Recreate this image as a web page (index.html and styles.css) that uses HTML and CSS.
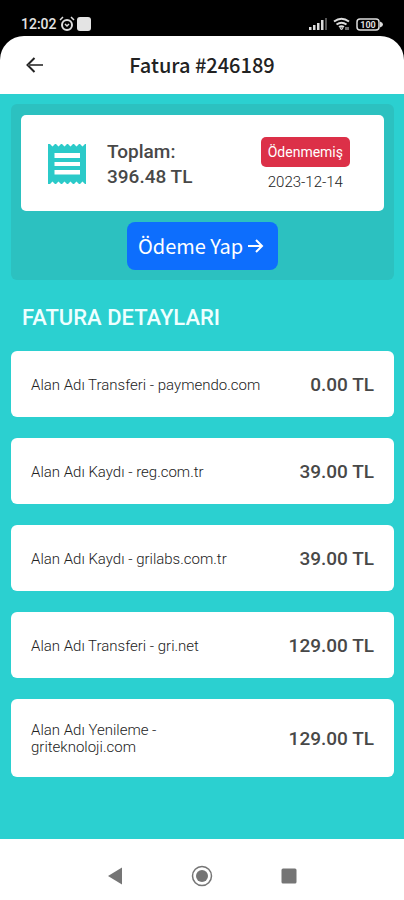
FILE: index.html
```html
<!DOCTYPE html>
<html lang="tr">
<head>
<meta charset="utf-8">
<meta name="viewport" content="width=device-width, initial-scale=1">
<title>Fatura #246189</title>
<link rel="stylesheet" href="styles.css">
</head>
<body>
<div class="status">
  <div class="status-group">
    <span class="clock">12:02</span>
    <svg width="16" height="16" viewBox="0 0 16 16" fill="none" stroke="#ddd" stroke-width="2"><circle cx="8" cy="9" r="5"/><path d="M1 4 4 1M15 4 12 1M6 8l2 2 2-2" stroke-width="1.5"/></svg>
    <span class="app-dot"></span>
  </div>
  <div class="status-group status-right">
    <svg width="18" height="12" viewBox="0 0 18 12" fill="#ddd"><path d="M0 9h2.500v3H0zM4 7h2.500v5H4zM8 5h2.500v7H8zM12 2h2.500v10H12z"/><path d="M16 0h2v12h-2z" fill="#555"/></svg>
    <svg width="17" height="14" viewBox="0 0 17 14" fill="none" stroke="#ddd" stroke-width="2"><path d="M1 4.500Q8.500-1 16 4.500M3.500 7.500q5-3.500 10 0M6 10q2.500-1.500 5 0"/><path d="M7 11h3l-1.500 2zM13 10v3M15 10v3" stroke-width="1"/></svg>
    <svg width="27" height="13" viewBox="0 0 27 13"><rect x="1" y="1" width="22" height="11" rx="3" fill="none" stroke="#ddd" stroke-width="1.500"/><path d="M24 3.500q3 1 3 3t-3 3z" fill="#ddd"/><text x="12" y="9.500" text-anchor="middle" class="battery-text">100</text></svg>
  </div>
</div>
<header class="header">
  <button class="back" aria-label="Geri"><svg width="18" height="16" viewBox="0 0 18 16" fill="none" stroke="#222" stroke-width="2"><path d="M8.500 1 1.500 8l7 7"/><path d="M2 8h15" stroke="#555"/></svg></button>
  <h1>Fatura #246189</h1>
</header>
<main class="main">
  <section class="panel">
    <div class="summary">
      <svg width="38" height="40" viewBox="0 0 38 40"><path fill="#2bcac9" d="M0 0l2 0 2.500 2.500L7 0h1l2.500 2.500L13 0h1l2.500 2.500L19 0h1l2.500 2.500L25 0h1l2.500 2.500L31 0h1l2.500 2.500L37 0h1v40h-1l-2.500-2.500L32 40h-1l-2.500-2.500L26 40h-1l-2.500-2.500L20 40h-1l-2.500-2.500L14 40h-1l-2.500-2.500L8 40H7l-2.500-2.500L2 40H0z"/><path fill="#fff" d="M6.500 9h25.500v5H6.500zM6.500 18h25.500v4H6.500zM6.500 26h25.500v4.500H6.500z"/></svg>
      <div class="total"><span>Toplam:</span><span>396.48 TL</span></div>
      <div class="state"><span class="badge">Ödenmemiş</span><time datetime="2023-12-14">2023-12-14</time></div>
    </div>
    <button class="pay">Ödeme Yap <svg width="16" height="16" viewBox="0 0 16 16" fill="none" stroke="#fff" stroke-width="2"><path d="M0 8h14M8 2l6 6-6 6"/></svg></button>
  </section>
  <h2>FATURA DETAYLARI</h2>
  <ul class="items">
    <li><span class="name">Alan Adı Transferi - paymendo.com</span><span class="price">0.00 TL</span></li>
    <li><span class="name">Alan Adı Kaydı - reg.com.tr</span><span class="price">39.00 TL</span></li>
    <li><span class="name">Alan Adı Kaydı - grilabs.com.tr</span><span class="price">39.00 TL</span></li>
    <li><span class="name">Alan Adı Transferi - gri.net</span><span class="price">129.00 TL</span></li>
    <li><span class="name">Alan Adı Yenileme -<br>griteknoloji.com</span><span class="price">129.00 TL</span></li>
  </ul>
</main>
<nav class="navbar">
  <button aria-label="Geri"><svg width="22" height="22" viewBox="0 0 22 22"><path d="M4 11 18 2.500v17z" fill="#757575"/></svg></button>
  <button aria-label="Ana ekran"><svg width="22" height="22" viewBox="0 0 22 22"><circle cx="11" cy="11" r="9.500" fill="none" stroke="#757575" stroke-width="1.500"/><circle cx="11" cy="11" r="6" fill="#757575"/></svg></button>
  <button aria-label="Son uygulamalar"><svg width="22" height="22" viewBox="0 0 22 22"><rect x="3.500" y="3.500" width="15" height="15" rx="1.500" fill="#757575"/></svg></button>
</nav>
</body>
</html>
```
FILE: styles.css
```css
* { box-sizing: border-box; }
body {
  margin: 0;
  min-height: 100vh;
  display: flex;
  flex-direction: column;
  background: #000;
  font-family: Roboto, sans-serif;
  color: #484848;
}
button { border: 0; background: none; padding: 0; font: inherit; color: inherit; }
svg { display: block; flex: none; }
h1, h2, ul { margin: 0; padding: 0; }

.status {
  height: 36px;
  padding: 12px 21px 0 21px;
  display: flex;
  justify-content: space-between;
}
.status-group { display: flex; align-items: center; height: 24px; gap: 2px; }
.status-right { gap: 6px; }
.clock { color: #e4e4e4; font-size: 14px; font-weight: 500; }
.app-dot { width: 14px; height: 14px; border-radius: 3px; background: #e4e4e4; }
.battery-text { font: 700 9px Roboto, sans-serif; fill: #ddd; }

.header {
  height: 58px;
  background: #fff;
  border-radius: 24px 24px 0 0;
  display: grid;
  grid-template-columns: 44px 1fr 44px;
  align-items: center;
}
.back { height: 44px; display: flex; align-items: center; justify-content: flex-end; }
.header h1 {
  text-align: center;
  font: 500 20px/28px "Noto Sans CJK SC", "Noto Sans", sans-serif;
  color: #222;
}

.main { flex: 1; padding: 10px 10px 62px 11px; background: #2bd0d0; }
.panel {
  padding: 11px 10px 10px;
  border-radius: 6px;
  background: #2cc1c0;
  display: flex;
  flex-direction: column;
  align-items: center;
  gap: 11px;
}
.summary {
  width: 100%;
  height: 96px;
  padding: 2px 34px 0 27px;
  border-radius: 5px;
  background: #fff;
  display: flex;
  align-items: center;
}
.total {
  margin-left: 21px;
  flex: 1;
  display: flex;
  flex-direction: column;
  font-size: 19px;
  line-height: 25px;
  font-weight: 500;
}
.state { display: flex; flex-direction: column; align-items: center; gap: 6px; }
.badge {
  padding: 0 7px;
  border-radius: 5px;
  background: #dc3048;
  color: #fff;
  font-size: 14px;
  line-height: 30px;
}
.state time { font-size: 15px; line-height: 18px; font-weight: 300; color: #222; }
.pay {
  height: 48px;
  padding: 0 14px 0 11px;
  border-radius: 8px;
  background: #0d6efd;
  color: #fff;
  font: 400 20px/28px "Noto Sans CJK SC", "Noto Sans", sans-serif;
  display: flex;
  align-items: center;
  gap: 5px;
}
h2 {
  padding: 23px 11px 19px;
  font-size: 22px;
  line-height: 29px;
  font-weight: 500;
  color: #eff;
}
.items { list-style: none; display: flex; flex-direction: column; gap: 21px; }
.items li {
  min-height: 66px;
  padding: 23px 20px 21px;
  border-radius: 6px;
  background: #fff;
  display: flex;
  align-items: center;
  justify-content: space-between;
  gap: 20px;
}
.name { font-size: 15px; line-height: 17px; font-weight: 300; color: #222; }
.price { flex: none; font-size: 19px; line-height: 22px; font-weight: 500; }

.navbar {
  height: 61px;
  padding-top: 12px;
  background: #fff;
  display: flex;
  align-items: center;
  justify-content: center;
  gap: 65px;
}
```
